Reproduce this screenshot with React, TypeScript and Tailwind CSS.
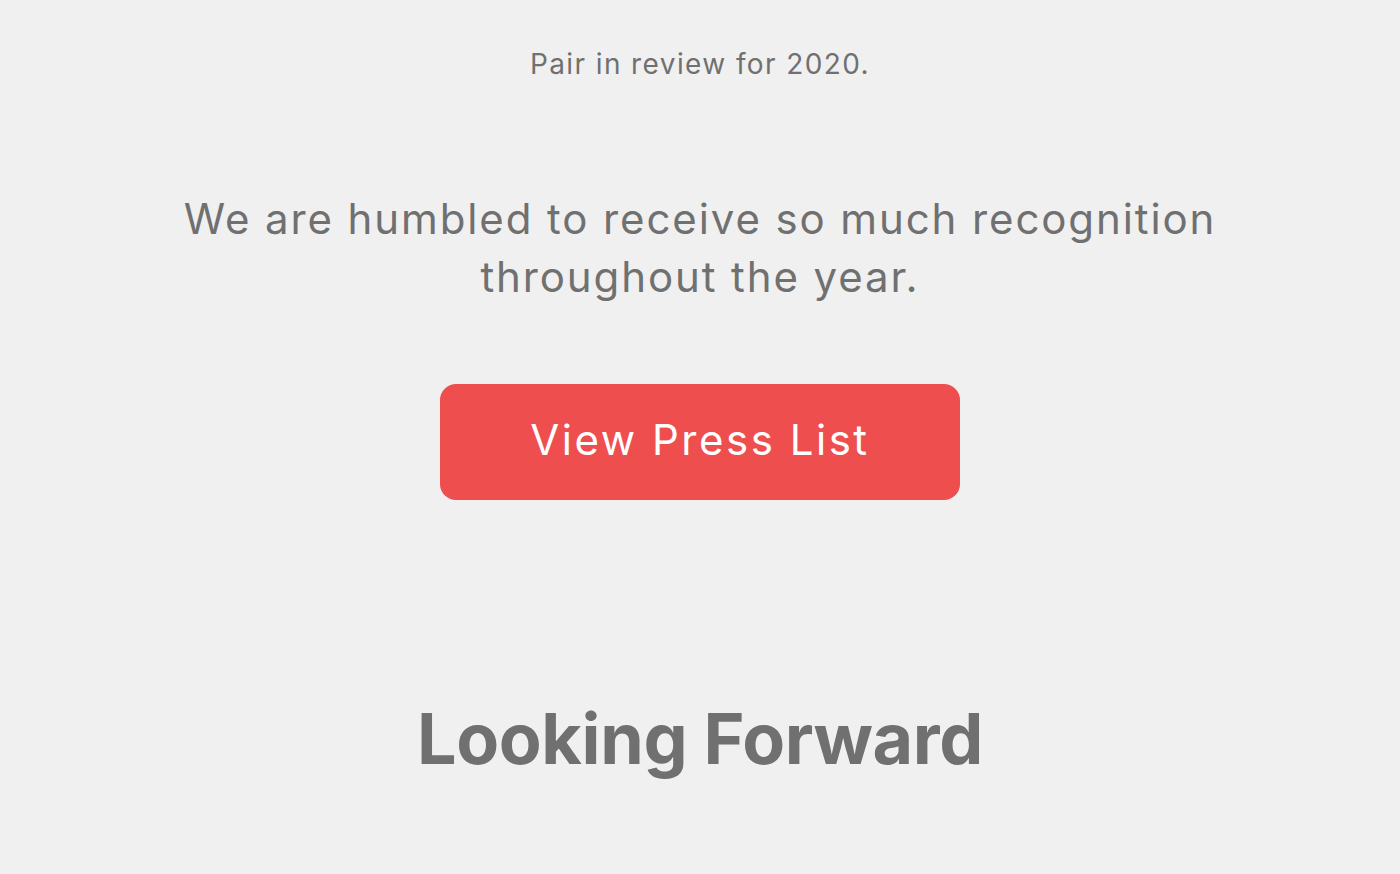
import React from "react";

const App = () => {
  return (
    <main
      className="min-h-screen w-full bg-[#f0f0f0] flex flex-col items-center text-[#707070]"
      style={{ fontFamily: "Inter, 'Noto Sans', sans-serif" }}
    >
      {/* Intro line */}
      <p className="mt-[44px] text-[28px] leading-[40px] tracking-[0.05em]">Pair in review for 2020.</p>

      {/* Press blurb */}
      <p className="mt-[106px] max-w-[1200px] text-center text-[42px] leading-[58px] tracking-[0.045em]">
        We are humbled to receive so much recognition
        <br />
        throughout the year.
      </p>

      {/* CTA */}
      <button className="mt-[78px] w-[520px] h-[116px] pb-[6px] rounded-[16px] bg-[#ef4e4e] text-white text-[42px] tracking-[0.06em]">
        View Press List
      </button>

      {/* Next section heading */}
      <h2 className="mt-[197px] text-[70px] leading-[84px] font-bold tracking-[-0.005em]">Looking Forward</h2>
    </main>
  );
};

export default App;
